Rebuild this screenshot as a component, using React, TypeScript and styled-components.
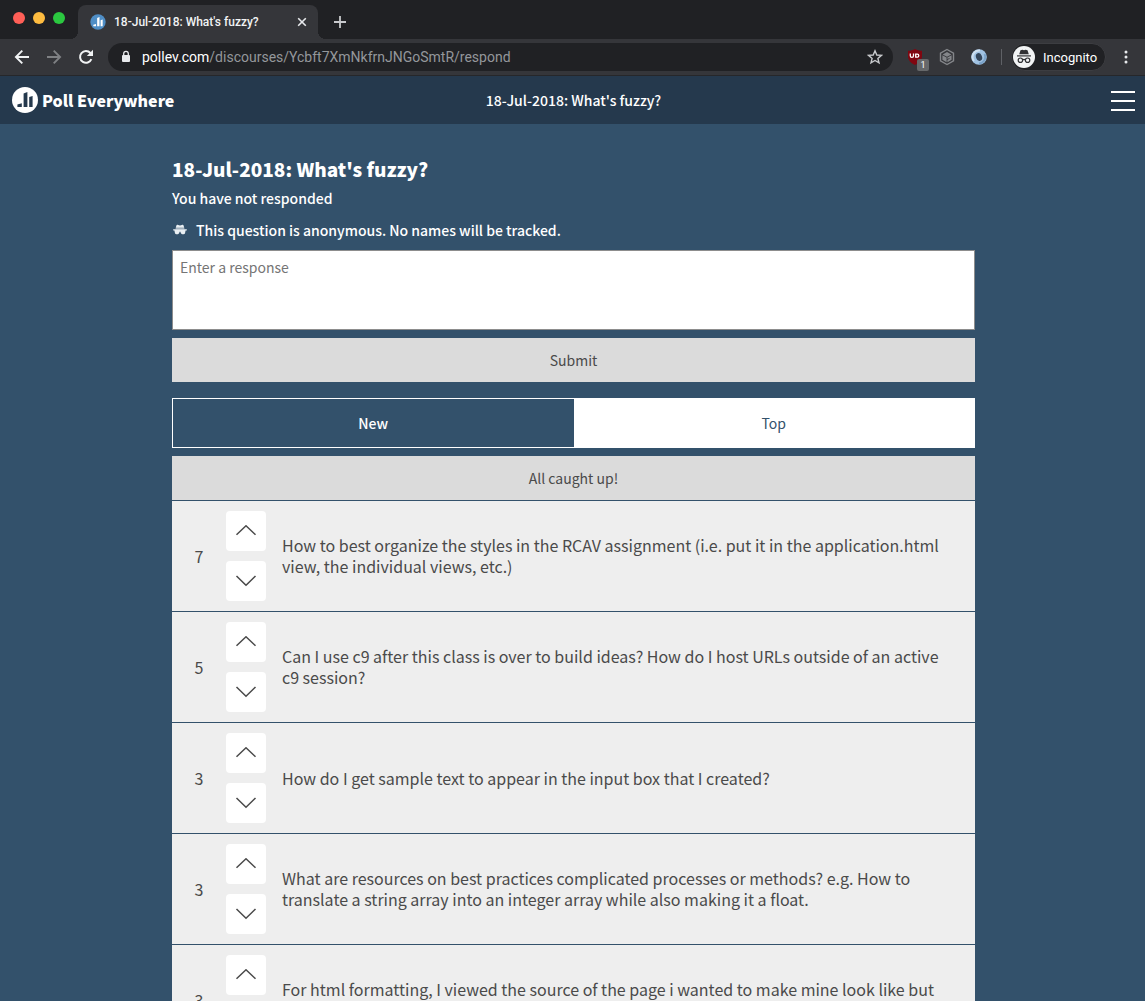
import React from 'react';
import styled, { createGlobalStyle } from 'styled-components';

const pageFont = '"Noto Sans CJK JP", "Noto Sans CJK SC", "Noto Sans", sans-serif';
const chromeFont = 'Roboto, Inter, "Liberation Sans", sans-serif';

const GlobalStyle = createGlobalStyle`
  *, *::before, *::after { box-sizing: border-box; }
  body { margin: 0; background: #33516b; }
  button { border: 0; padding: 0; margin: 0; background: none; color: inherit; font: inherit; cursor: pointer; }
  svg { display: block; flex: none; }
`;

const Window = styled.div`
  display: flex;
  flex-direction: column;
  height: 100vh;
  overflow: hidden;
`;

/* Browser chrome */

const TabStrip = styled.div`
  display: flex;
  align-items: center;
  height: 39px;
  padding-left: 13px;
  background: #202124;
  font-family: ${chromeFont};
  flex: none;
`;

const Lights = styled.div`
  display: flex;
  gap: 8px;
  margin-right: 13px;
`;

const Light = styled.button<{ $color: string }>`
  width: 12px;
  height: 12px;
  border-radius: 50%;
  background: ${(p) => p.$color};
  margin-bottom: 3px;
`;

const BrowserTab = styled.div`
  position: relative;
  align-self: flex-end;
  display: flex;
  align-items: center;
  gap: 8px;
  width: 240px;
  height: 34px;
  padding: 0 8px 0 12px;
  border-radius: 8px 8px 0 0;
  background: #35363a;
  color: #f1f3f4;
  font-size: 12px;
  line-height: 16px;

  &::before, &::after {
    content: '';
    position: absolute;
    bottom: 0;
    width: 8px;
    height: 8px;
  }
  &::before { right: 100%; background: radial-gradient(circle at 0 0, #202124 8px, #35363a 8px); }
  &::after { left: 100%; background: radial-gradient(circle at 100% 0, #202124 8px, #35363a 8px); }
`;

const TabTitle = styled.span`
  flex: 1;
  white-space: nowrap;
  font-weight: 500;
`;

const IconButton = styled.button`
  display: grid;
  place-items: center;
  width: 16px;
  height: 24px;
  flex: none;
`;

const NewTab = styled(IconButton)`
  margin: 5px 0 0 14px;
`;

const Toolbar = styled.div`
  display: flex;
  align-items: center;
  height: 37px;
  padding: 0 11px 0 14px;
  background: #35363a;
  border-bottom: 1px solid #26272a;
  font-family: ${chromeFont};
  flex: none;
`;

const NavButtons = styled.div`
  display: flex;
  gap: 16px;
  margin-right: 14px;
`;

const AddressBar = styled.div`
  display: flex;
  align-items: center;
  flex: 1;
  min-width: 0;
  height: 28px;
  padding: 0 10px 0 12px;
  border-radius: 14px;
  background: #202124;
`;

const Url = styled.div`
  flex: 1;
  min-width: 0;
  margin-left: 10px;
  overflow: hidden;
  white-space: nowrap;
  font-size: 14px;
  line-height: 20px;
  color: #94979b;
`;

const Host = styled.span`
  color: #fff;
`;

const Extensions = styled.div`
  display: flex;
  align-items: center;
  gap: 12px;
  margin: 0 12px;
`;

const Extension = styled.button`
  position: relative;
  display: grid;
  place-items: center;
  width: 20px;
  height: 20px;
`;

const Badge = styled.span`
  position: absolute;
  left: 12px;
  top: 12px;
  width: 12px;
  height: 12px;
  border-radius: 2px;
  background: #66686a;
  color: #fff;
  font-size: 9px;
  line-height: 12px;
  text-align: center;
`;

const Divider = styled.span`
  width: 1px;
  height: 16px;
  margin-right: 9px;
  background: #5f6166;
`;

const Profile = styled.button`
  display: flex;
  align-items: center;
  gap: 8px;
  width: 95px;
  height: 28px;
  padding-left: 1px;
  margin-right: 12px;
  border: 1px solid #3c3d41;
  border-radius: 14px;
  background: #202124;
  color: #fff;
  font-size: 13px;
`;

/* Poll page */

const Page = styled.div`
  flex: 1;
  min-height: 0;
  overflow-y: auto;
  scrollbar-width: none;
  background: #33516b;
  color: #fff;
  font-family: ${pageFont};
`;

const Header = styled.header`
  display: grid;
  grid-template-columns: 1fr auto 1fr;
  align-items: center;
  height: 48px;
  padding: 0 10px 0 12px;
  background: #25394d;
`;

const Brand = styled.a`
  display: flex;
  align-items: center;
  gap: 4px;
  justify-self: start;
  color: #fff;
  font-size: 16px;
  font-weight: 900;
  line-height: 24px;
  text-decoration: none;
`;

const HeaderTitle = styled.span`
  font-size: 14px;
  line-height: 20px;
  font-weight: 500;
`;

const MenuButton = styled.button`
  justify-self: end;
`;

const Main = styled.main`
  max-width: 837px;
  margin: 0 auto;
  padding: 31px 16px 32px 18px;
`;

const Title = styled.h1`
  margin: 0;
  font-size: 19px;
  line-height: 28px;
  font-weight: 900;
`;

const Status = styled.p`
  margin: 3px 0 8px;
  font-size: 14px;
  line-height: 24px;
  font-weight: 500;
`;

const Notice = styled.p`
  display: flex;
  align-items: center;
  gap: 8px;
  margin: 0 0 8px;
  font-size: 14px;
  line-height: 24px;
  font-weight: 500;
`;

const ResponseBox = styled.textarea`
  display: block;
  width: 100%;
  height: 80px;
  padding: 6px 7px;
  border: 1px solid #8d8d8d;
  border-radius: 0;
  background: #fff;
  color: #4d4d4d;
  font-family: inherit;
  font-size: 14px;
  line-height: 20px;
  resize: none;

  &::placeholder { color: #757575; opacity: 1; }
`;

const GreyButton = styled.button`
  display: block;
  width: 100%;
  height: 44px;
  margin-top: 8px;
  background: #dbdbdb;
  color: #4a4a4a;
  font-size: 14px;
`;

const SortTabs = styled.div`
  display: grid;
  grid-template-columns: 1fr 1fr;
  height: 50px;
  margin-top: 16px;
  border: 1px solid #fff;
`;

const SortTab = styled.button<{ $active?: boolean }>`
  background: ${(p) => (p.$active ? '#33516b' : '#fff')};
  color: ${(p) => (p.$active ? '#fff' : '#33516b')};
  font-size: 14px;
  font-weight: ${(p) => (p.$active ? 500 : 400)};
`;

const Responses = styled.ul`
  margin: 0;
  padding: 0;
  list-style: none;
`;

const Row = styled.li`
  display: grid;
  grid-template-columns: 54px 40px 1fr;
  align-items: center;
  margin-top: 1px;
  padding: 10px 16px 10px 0;
  background: #eee;
  color: #4a4a4a;
`;

const Score = styled.span`
  text-align: center;
  font-size: 16px;
  line-height: 21px;
`;

const Votes = styled.div`
  display: grid;
  gap: 10px;
`;

const VoteButton = styled.button`
  display: grid;
  place-items: center;
  width: 40px;
  height: 40px;
  border-radius: 4px;
  background: #fff;
`;

const ResponseText = styled.p`
  margin: 0 0 0 16px;
  font-size: 16px;
  line-height: 21px;
  white-space: pre-line;
`;

const LogoBars = ({ color }: { color: string }) => (
  <g fill={color}>
    <path d="M5.4 17.4 9.8 16.200V20H5.400z" />
    <path d="M11.600 6.400 15.400 5V20H11.600z" />
    <path d="M17.200 10 20.600 9V20H17.200z" />
  </g>
);

const Favicon = () => (
  <svg width="16" height="16" viewBox="0 0 26 26">
    <circle cx="13" cy="13" r="12.5" fill="#4f8ec6" />
    <LogoBars color="#fff" />
  </svg>
);

const Logo = () => (
  <svg width="26" height="26" viewBox="0 0 26 26">
    <circle cx="13" cy="13" r="13" fill="#fff" />
    <LogoBars color="#25394d" />
  </svg>
);

const Chevron = ({ down }: { down?: boolean }) => (
  <svg width="22" height="12" viewBox="0 0 22 12" fill="none" stroke="#4a4a4a" strokeWidth="1.5">
    <path d={down ? 'M1.5 1 11 10.3 20.5 1' : 'M1.5 9.8 11 .8 20.5 9.8'} />
  </svg>
);

const responses = [
  { score: 7, text: 'How to best organize the styles in the RCAV assignment (i.e. put it in the application.html view, the individual views, etc.)' },
  { score: 5, text: 'Can I use c9 after this class is over to build ideas? How do I host URLs outside of an active c9 session?' },
  { score: 3, text: 'How do I get sample text to appear in the input box that I created?' },
  { score: 3, text: 'What are resources on best practices complicated processes or methods? e.g. How to translate a string array into an integer array while also making it a float.' },
  { score: 3, text: 'For html formatting, I viewed the source of the page i wanted to make mine look like but\n\u00a0' },
];

export default function App() {
  return (
    <Window>
      <GlobalStyle />
      <TabStrip>
        <Lights>
          <Light $color="#ff5f57" aria-label="Close window" />
          <Light $color="#febc40" aria-label="Minimize window" />
          <Light $color="#2bc840" aria-label="Zoom window" />
        </Lights>
        <BrowserTab>
          <Favicon />
          <TabTitle>18-Jul-2018: What's fuzzy?</TabTitle>
          <IconButton aria-label="Close tab">
            <svg width="10" height="10" viewBox="0 0 10 10" stroke="#e8eaed" strokeWidth="1.6">
              <path d="M1.2 1.2 8.8 8.8M8.8 1.2 1.2 8.8" />
            </svg>
          </IconButton>
        </BrowserTab>
        <NewTab aria-label="New tab">
          <svg width="12" height="12" viewBox="0 0 12 12" stroke="#c8cacd" strokeWidth="1.8">
            <path d="M6 0V12M0 6H12" />
          </svg>
        </NewTab>
      </TabStrip>

      <Toolbar>
        <NavButtons>
          <IconButton aria-label="Back">
            <svg width="16" height="16" viewBox="0 0 16 16" fill="none" stroke="#f1f3f4" strokeWidth="1.9">
              <path d="M15 8H2.5M8.3 1.6 1.9 8l6.4 6.4" />
            </svg>
          </IconButton>
          <IconButton aria-label="Forward">
            <svg width="16" height="16" viewBox="0 0 16 16" fill="none" stroke="#7f8184" strokeWidth="1.9">
              <path d="M1 8h12.5M7.7 1.6 14.1 8l-6.4 6.4" />
            </svg>
          </IconButton>
          <IconButton aria-label="Reload">
            <svg width="16" height="16" viewBox="0 0 16 16" fill="none" stroke="#f1f3f4" strokeWidth="2">
              <path d="M13.4 10.2A5.9 5.9 0 1 1 12.4 4L13 4.8" />
              <path d="M15 .8V7H8.8z" fill="#f1f3f4" stroke="none" />
            </svg>
          </IconButton>
        </NavButtons>
        <AddressBar>
          <svg width="12" height="14" viewBox="0 0 12 14">
            <rect x="2" y="5" width="8" height="7" rx="1" fill="#e8eaed" />
            <path d="M3.7 5.5V3.6a2.3 2.3 0 0 1 4.6 0v1.9" fill="none" stroke="#e8eaed" strokeWidth="1.3" />
          </svg>
          <Url>
            <Host>pollev.com</Host>/discourses/Ycbft7XmNkfrnJNGoSmtR/respond
          </Url>
          <IconButton aria-label="Bookmark this page">
            <svg width="16" height="16" viewBox="0 0 16 16" fill="none" stroke="#c8cacd" strokeWidth="1.4">
              <path d="M8 1.8 9.8 6l4.6.4-3.5 3 1.1 4.5L8 11.5l-4 2.4 1.1-4.5-3.5-3L6.2 6z" />
            </svg>
          </IconButton>
        </AddressBar>
        <Extensions>
          <Extension aria-label="uBlock Origin, 1 blocked">
            <svg width="16" height="18" viewBox="0 0 16 18">
              <path d="M8 1c2 1.2 4.2 1.7 7 1.8V8c0 4.5-3 7-7 9-4-2-7-4.500-7-9V2.800C3.800 2.700 6 2.200 8 1z" fill="#800610" />
              <path d="M3.300 5.500v2.200a1.500 1.500 0 0 0 3.200 0V5.500M8.700 9.200V6.200h1.600a1.500 1.500 0 0 1 0 3z" fill="none" stroke="#fff" strokeWidth="1.3" />
            </svg>
            <Badge>1</Badge>
          </Extension>
          <Extension aria-label="Page inspector">
            <svg width="16" height="18" viewBox="0 0 16 18" fill="none" stroke="#84868a">
              <path d="M8 1.500 14.500 5.200v7.600L8 16.500 1.500 12.800V5.200z" strokeWidth="1.400" />
              <path d="M8 4 12.400 6.400 8 8.800 3.600 6.400z" fill="#84868a" stroke="none" />
              <path d="M3.400 7.300 7.600 9.600V14.200L3.400 11.800zM12.600 7.300v4.500L8.400 14.200V12l2.200-1.200V9.900L8.400 11V9.600z" fill="#84868a" stroke="none" />
            </svg>
          </Extension>
          <Extension aria-label="JSON viewer">
            <svg width="16" height="16" viewBox="0 0 16 16" fill="none">
              <circle cx="8" cy="8" r="7.800" fill="#a0c2e2" />
              <path d="M9 1.500A6.500 6.500 0 0 0 3 12" stroke="#cfe0f0" strokeWidth="2" />
              <path d="M8 14.500A6.500 6.500 0 0 0 13.500 5" stroke="#7ba3c9" strokeWidth="2" />
              <ellipse cx="8" cy="8" rx="3" ry="4" fill="#35465a" transform="rotate(-20 8 8)" />
            </svg>
          </Extension>
        </Extensions>
        <Divider />
        <Profile>
          <svg width="22" height="22" viewBox="0 0 22 22">
            <circle cx="11" cy="11" r="11" fill="#f1f3f4" />
            <path d="M7.500 4.200 9.500 3.800 11 4.200 12.500 3.800 14.500 4.200 15.800 8.300H6.200z" fill="#303134" />
            <path d="M4 9.900H18" stroke="#303134" strokeWidth="1.200" />
            <g fill="none" stroke="#303134" strokeWidth="1.200">
              <circle cx="7.400" cy="14.200" r="2.200" />
              <circle cx="14.600" cy="14.200" r="2.200" />
              <path d="M9.600 14c.8-.6 2-.6 2.800 0" />
            </g>
          </svg>
          Incognito
        </Profile>
        <IconButton aria-label="Browser menu">
          <svg width="4" height="14" viewBox="0 0 4 14" fill="#e8eaed">
            <circle cx="2" cy="2" r="1.500" />
            <circle cx="2" cy="7" r="1.500" />
            <circle cx="2" cy="12" r="1.500" />
          </svg>
        </IconButton>
      </Toolbar>

      <Page>
        <Header>
          <Brand href="#">
            <Logo />
            Poll Everywhere
          </Brand>
          <HeaderTitle>18-Jul-2018: What's fuzzy?</HeaderTitle>
          <MenuButton aria-label="Menu">
            <svg width="24" height="22" viewBox="0 0 24 22" fill="#fff">
              <path d="M0 2h24v2H0zM0 11h24v2H0zM0 20h24v2H0z" />
            </svg>
          </MenuButton>
        </Header>
        <Main>
          <Title>18-Jul-2018: What's fuzzy?</Title>
          <Status>You have not responded</Status>
          <Notice>
            <svg width="16" height="12" viewBox="0 0 16 12" fill="#e9eef2">
              <path d="M3.800 3.800 4.400 1.600C4.600.6 5.500.6 6.200 1c1.100.6 2.500.6 3.600 0 .7-.4 1.600-.4 1.800.6l.6 2.200z" />
              <path d="M3.600 3.800h8.800v1.600H3.600z" opacity=".6" />
              <path d="M1.200 5.200H14.800V6.400H13.600L13 9.200C12.700 10.600 9.400 10.800 8.800 9L8.400 7.800H7.600L7.200 9C6.600 10.800 3.300 10.600 3 9.200L2.400 6.400H1.200z" />
            </svg>
            This question is anonymous. No names will be tracked.
          </Notice>
          <ResponseBox aria-label="Enter a response" placeholder="Enter a response" />
          <GreyButton>Submit</GreyButton>
          <SortTabs>
            <SortTab $active aria-pressed="true">New</SortTab>
            <SortTab aria-pressed="false">Top</SortTab>
          </SortTabs>
          <GreyButton>All caught up!</GreyButton>
          <Responses>
            {responses.map((r, i) => (
              <Row key={i}>
                <Score>{r.score}</Score>
                <Votes>
                  <VoteButton aria-label="Upvote"><Chevron /></VoteButton>
                  <VoteButton aria-label="Downvote"><Chevron down /></VoteButton>
                </Votes>
                <ResponseText>{r.text}</ResponseText>
              </Row>
            ))}
          </Responses>
        </Main>
      </Page>
    </Window>
  );
}
